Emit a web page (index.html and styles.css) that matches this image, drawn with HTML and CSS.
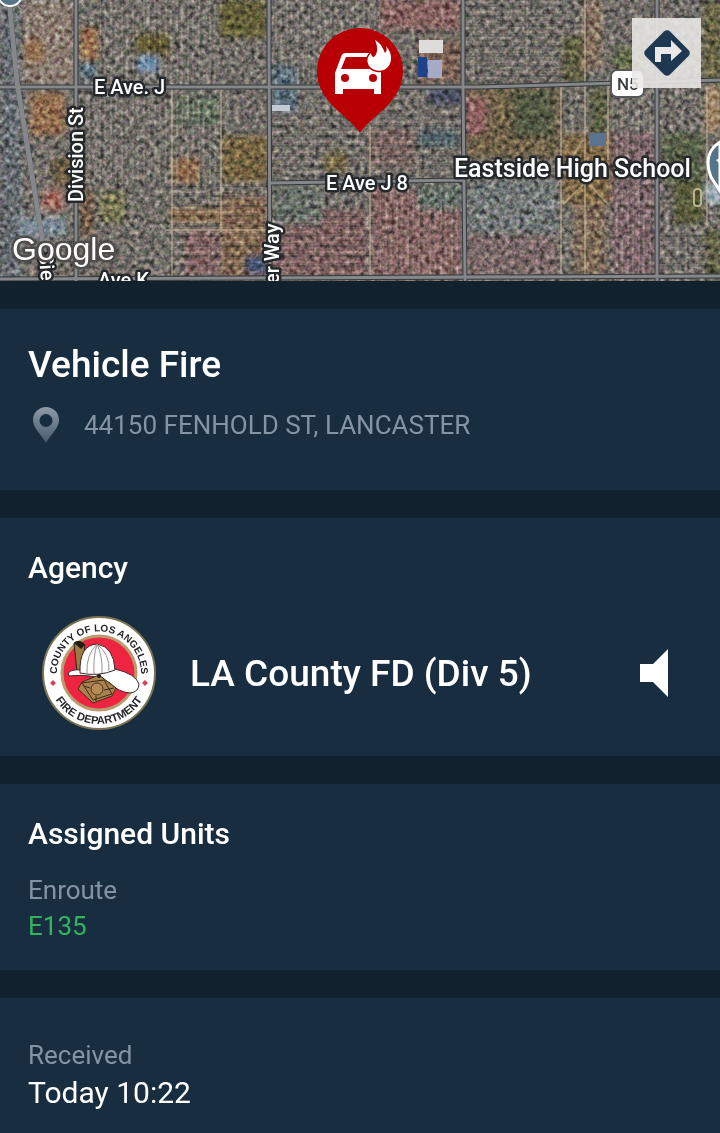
FILE: index.html
```html
<!DOCTYPE html>
<html lang="en">
<head>
    <meta charset="UTF-8">
    <meta name="viewport" content="width=device-width, initial-scale=1.0">
    <title>Vehicle Fire</title>
    <link rel="stylesheet" href="styles.css">
</head>
<body>
    <div class="map">
        <svg class="map-view" viewBox="0 0 720 281" role="img" aria-label="Incident map">
            <defs>
                <filter id="grain" x="0" y="0" width="100%" height="100%" color-interpolation-filters="sRGB">
                    <feTurbulence type="fractalNoise" baseFrequency="0.2" numOctaves="3" seed="7"/>
                    <feColorMatrix values="1.3 .5 .3 0 -.62  1.1 .7 .3 0 -.62  1.1 .5 .5 0 -.62  0 0 0 0 1"/>
                </filter>
                <filter id="soft"><feGaussianBlur stdDeviation="3"/></filter>
                <pattern id="blocksV" width="11" height="47" patternUnits="userSpaceOnUse">
                    <path d="M1 0V42M6 4V47" stroke="#c9bfb4" stroke-opacity=".35"/>
                    <path d="M3 0V47M0 44H11" stroke="#39403b" stroke-opacity=".25"/>
                </pattern>
                <pattern id="blocksH" width="53" height="10" patternUnits="userSpaceOnUse">
                    <path d="M0 2H48M50 0V10" stroke="#d2beb0" stroke-opacity=".4"/>
                    <path d="M0 6H53" stroke="#383f40" stroke-opacity=".3" stroke-width="2"/>
                </pattern>
            </defs>

            <!-- Land -->
            <rect width="720" height="281" fill="#7b7771"/>
            <g filter="url(#soft)">
                <rect x="0" y="0" width="22" height="281" fill="#70767a"/>
                <rect x="22" y="0" width="52" height="86" fill="#93857a"/>
                <rect x="24" y="40" width="20" height="22" fill="#9c7c58"/>
                <rect x="80" y="28" width="18" height="32" fill="#a37a56"/>
                <rect x="80" y="62" width="16" height="17" fill="#617985"/>
                <rect x="30" y="92" width="35" height="43" fill="#987654"/>
                <rect x="52" y="158" width="23" height="28" fill="#726446"/>
                <rect x="43" y="190" width="20" height="20" fill="#ac776b"/>
                <rect x="18" y="218" width="48" height="18" fill="#8795a0"/>
                <rect x="80" y="190" width="14" height="46" fill="#7e6650"/>
                <rect x="100" y="192" width="25" height="30" fill="#7f7c58"/>
                <rect x="136" y="34" width="34" height="22" fill="#6a6135"/>
                <rect x="138" y="56" width="20" height="16" fill="#7899b8"/>
                <rect x="220" y="0" width="46" height="38" fill="#6b663e"/>
                <rect x="174" y="96" width="46" height="28" fill="#6c7766"/>
                <rect x="174" y="158" width="26" height="25" fill="#977352"/>
                <rect x="222" y="136" width="46" height="46" fill="#7f6d48"/>
                <rect x="170" y="208" width="50" height="14" fill="#927655"/>
                <rect x="220" y="196" width="48" height="84" fill="#8a7058"/>
                <rect x="184" y="230" width="34" height="46" fill="#886b6b"/>
                <rect x="246" y="256" width="22" height="18" fill="#44597b"/>
                <rect x="380" y="0" width="82" height="30" fill="#8f6c69"/>
                <rect x="272" y="66" width="24" height="46" fill="#637886"/>
                <rect x="418" y="40" width="44" height="42" fill="#83695b"/>
                <rect x="428" y="88" width="34" height="16" fill="#4d5368"/>
                <rect x="418" y="130" width="40" height="16" fill="#526870"/>
                <rect x="325" y="152" width="22" height="20" fill="#7b7048"/>
                <rect x="370" y="128" width="45" height="40" fill="#836e6a"/>
                <rect x="272" y="210" width="94" height="68" fill="#866968"/>
                <rect x="372" y="190" width="90" height="88" fill="#8b6c6b"/>
                <rect x="272" y="186" width="50" height="38" fill="#717870"/>
                <rect x="418" y="186" width="44" height="24" fill="#6c786f"/>
                <rect x="466" y="86" width="94" height="72" fill="#78694f"/>
                <rect x="512" y="90" width="42" height="48" fill="#5a6048"/>
                <rect x="466" y="98" width="20" height="36" fill="#966b69"/>
                <rect x="562" y="36" width="22" height="48" fill="#696748"/>
                <rect x="614" y="48" width="30" height="28" fill="#6b7150"/>
                <rect x="585" y="0" width="16" height="70" fill="#8f7c68"/>
                <rect x="590" y="88" width="18" height="45" fill="#64684a"/>
                <rect x="562" y="134" width="50" height="70" fill="#85704d"/>
                <rect x="611" y="132" width="48" height="146" fill="#836d70"/>
                <rect x="468" y="180" width="90" height="54" fill="#7a807f"/>
                <rect x="466" y="234" width="90" height="42" fill="#837170"/>
                <rect x="574" y="204" width="32" height="74" fill="#877460"/>
                <rect x="662" y="134" width="42" height="50" fill="#5f684f"/>
                <rect x="704" y="0" width="16" height="82" fill="#6f6a49"/>
                <rect x="706" y="86" width="14" height="46" fill="#a68d6c"/>
                <rect x="674" y="182" width="30" height="42" fill="#5e6241"/>
                <rect x="706" y="184" width="14" height="20" fill="#a8bbc5"/>
                <rect x="706" y="230" width="14" height="48" fill="#656547"/>
            </g>
            <rect x="80" y="90" width="140" height="96" fill="url(#blocksV)"/>
            <rect x="270" y="0" width="110" height="84" fill="url(#blocksV)"/>
            <rect x="100" y="0" width="120" height="84" fill="url(#blocksV)"/>
            <rect x="380" y="186" width="84" height="92" fill="url(#blocksV)"/>
            <rect x="612" y="92" width="46" height="186" fill="url(#blocksV)"/>
            <rect x="170" y="186" width="98" height="92" fill="url(#blocksH)"/>
            <rect x="272" y="110" width="190" height="72" fill="url(#blocksH)"/>
            <rect x="272" y="216" width="106" height="62" fill="url(#blocksH)"/>
            <rect x="466" y="0" width="96" height="80" fill="url(#blocksH)"/>
            <rect x="660" y="228" width="46" height="50" fill="url(#blocksH)"/>
            <rect class="grain" width="720" height="281" filter="url(#grain)"/>
            <rect x="419" y="40" width="24" height="13" fill="#dedcda"/>
            <rect x="418" y="57" width="9" height="20" fill="#1d438b"/>
            <rect x="428" y="60" width="14" height="18" fill="#a5abc4"/>
            <rect x="272" y="105" width="18" height="6" fill="#c4cad4"/>
            <rect x="590" y="133" width="16" height="13" fill="#5a7390"/>
            <rect x="694" y="189" width="7" height="17" rx="3" fill="none" stroke="#bcb388" stroke-width="2"/>
            <path d="M172 88V280M165 230H268M221 88V232M370 125V278M561 86V278M585 0V278M608 88V160M707 86V225M583 140L563 172M583 185L563 204M590 185L608 204" fill="none" stroke="#d7c4a4" stroke-opacity=".45" stroke-width="2"/>

            <!-- Roads -->
            <g class="road-edge">
                <path d="M0 87H480L720 80M76 0V281M269 0V60L270 281M463 0V85L465 281M657 0V281M270 183L465 180M0 279L720 276M9 0L17 82L44 250L50 281"/>
            </g>
            <g class="road">
                <path d="M0 87H480L720 80M76 0V281M269 0V60L270 281M463 0V85L465 281M657 0V281M270 183L465 180M0 279L720 276"/>
                <path class="road-wide" d="M9 0L17 82L44 250L50 281"/>
            </g>

            <!-- Places -->
            <circle cx="10" cy="-6" r="12" fill="#557487" stroke="#f4f6f7" stroke-width="2"/>
            <path d="M720 191L711 177Q708 170 708 163A24 24 0 0 1 720 142Z" fill="#557487" stroke="#fff" stroke-width="3"/>
            <path d="M716 160l4-2v6z" fill="#fff"/>
            <rect x="611" y="70" width="33" height="27" rx="6" fill="#fff" stroke="#55585b" stroke-width="2"/>
            <text class="shield" x="617" y="90">N5</text>

            <!-- Labels -->
            <g class="label">
                <text x="94" y="94">E Ave. J</text>
                <text x="326" y="190">E Ave J 8</text>
                <text x="98" y="287">Ave K</text>
                <text transform="translate(83 202) rotate(-90)">Division St</text>
                <text transform="translate(279 284) rotate(-90)">er Way</text>
                <text transform="translate(39 253) rotate(86)">Sie</text>
                <text class="label-place" x="454" y="177">Eastside High School</text>
                <text class="label-logo" x="12" y="260">Google</text>
            </g>

            <!-- Incident pin -->
            <path d="M360 133C352 121 340 114 330 103C322 93 317 84 317 71A43 43 0 0 1 403 71C403 84 398 93 390 103C380 114 368 121 360 133Z" fill="#b80004"/>
            <path d="M335 94V73L341 57Q342 53 346 53H372V57H346L341 69H381V94H374V89H343V94Z" fill="#fff"/>
            <circle cx="345" cy="78" r="4" fill="#b80004"/>
            <circle cx="373" cy="78" r="4" fill="#b80004"/>
            <path d="M375 40C382 44 383 49 385 53C387 51 387 49 386 46C393 54 392 62 388 67C382 73 374 71 370 67C366 62 367 57 371 53C371 55 372 57 374 57C378 53 378 47 375 40Z" fill="#fff" stroke="#b80004" stroke-width="3" paint-order="stroke"/>
        </svg>
        <button type="button" class="directions-btn" aria-label="Directions">
            <svg width="46" height="46" viewBox="0 0 46 46">
                <path d="M20 1.500Q23-1 26 1.500L44.500 20Q47 23 44.500 26L26 44.500Q23 47 20 44.500L1.500 26Q-1 23 1.500 20Z" fill="#1d3850"/>
                <path d="M11 32V17H27V10L38 21L27 31V24H17V32Z" fill="#ebe9e7"/>
            </svg>
        </button>
    </div>

    <div class="card incident">
        <h1>Vehicle Fire</h1>
        <div class="address">
            <svg width="28" height="36" viewBox="0 0 28 36">
                <defs>
                    <linearGradient id="pinFade" x1="0" y1="0" x2="0" y2="1">
                        <stop offset="0" stop-color="#8d9aa8"/>
                        <stop offset="1" stop-color="#46596d"/>
                    </linearGradient>
                </defs>
                <path fill="url(#pinFade)" fill-rule="evenodd" d="M14 0A13 13 0 0 1 27 13C27 21 19 27 14 36C9 27 1 21 1 13A13 13 0 0 1 14 0ZM14 7A6 6 0 1 0 14 20A6 6 0 1 0 14 7Z"/>
            </svg>
            <span>44150 FENHOLD ST, LANCASTER</span>
        </div>
    </div>

    <div class="card agency">
        <h2>Agency</h2>
        <div class="agency-row">
            <svg class="seal" width="114" height="114" viewBox="0 0 114 114" role="img" aria-label="County of Los Angeles Fire Department">
                <defs>
                    <path id="sealTop" d="M18 73A42 42 0 1 1 96 73"/>
                    <path id="sealBottom" d="M6 57A51 51 0 0 0 108 57"/>
                </defs>
                <circle cx="57" cy="57" r="56" fill="#fff" stroke="#7c7352" stroke-width="2"/>
                <circle cx="57" cy="57" r="37" fill="#ef2440" stroke="#b99b6d" stroke-width="3"/>
                <text class="seal-text"><textPath href="#sealTop" startOffset="50%">COUNTY OF LOS ANGELES</textPath></text>
                <text class="seal-text seal-text-bottom"><textPath href="#sealBottom" startOffset="50%">FIRE DEPARTMENT</textPath></text>
                <path d="M11 64l3 3-3 3-3-3zM103 64l3 3-3 3-3-3z" fill="#d5415a"/>
                <!-- Helmet -->
                <path d="M32 27Q37 23 43 29L39 57L35 56Z" fill="#9c7b43" stroke="#2b2118"/>
                <path d="M32 27Q38 22 43 29L39 33Z" fill="#231d1a"/>
                <path d="M26 57Q30 53 38 54L73 53Q94 58 97 68Q97 76 88 77Q76 76 68 67Q52 57 27 60Z" fill="#fff" stroke="#3d2525"/>
                <path d="M38 57Q37 29 55 28Q72 31 73 54Q56 61 38 57Z" fill="#fff" stroke="#3d2525"/>
                <path d="M55 28Q44 39 45 57M55 28Q51 41 52 58M55 28Q61 42 60 57M55 28Q68 38 67 55" fill="none" stroke="#99948f"/>
                <path d="M57 59L74 72L70 80L51 87L36 73L40 66Z" fill="#a9834e" stroke="#3c2a17"/>
                <path d="M40 67L51 84L70 78L62 64ZM42 70L48 72M62 74L72 72M54 80V85" fill="none" stroke="#3c2a17"/>
                <circle cx="55" cy="73" r="6" fill="#b98957" stroke="#4b3520"/>
                <circle cx="57" cy="60" r="2" fill="#2b2118"/>
            </svg>
            <span class="agency-name">LA County FD (Div 5)</span>
            <button type="button" class="audio-btn" aria-label="Listen">
                <svg width="29" height="48" viewBox="0 0 29 48">
                    <path d="M0 15H13L28 0V48L13 33H0Z" fill="#fff"/>
                </svg>
            </button>
        </div>
    </div>

    <div class="card units">
        <h2>Assigned Units</h2>
        <div class="caption">Enroute</div>
        <div class="unit-enroute">E135</div>
    </div>

    <div class="card received">
        <div class="caption">Received</div>
        <div class="received-time">Today 10:22</div>
    </div>
</body>
</html>
```
FILE: styles.css
```css
body {
    font-family: Roboto, sans-serif;
    background-color: #12212e;
    color: white;
    margin: 0;
}
.map {
    position: relative;
}
.map-view {
    display: block;
    width: 100%;
    height: auto;
}
.grain {
    mix-blend-mode: overlay;
    opacity: 0.6;
}
.road-edge path {
    fill: none;
    stroke: #343a3d;
    stroke-width: 5;
}
.road path {
    fill: none;
    stroke: #85878a;
    stroke-width: 3;
}
.road .road-wide {
    stroke-width: 5;
}
.label text {
    font-size: 20px;
    font-weight: 500;
    fill: white;
    stroke: #25282a;
    stroke-width: 5px;
    stroke-linejoin: round;
    paint-order: stroke;
}
.label .label-place {
    font-size: 25px;
}
.label .label-logo {
    font-family: "Liberation Sans", sans-serif;
    font-size: 32px;
    stroke: #4e4d4b;
}
.shield {
    font-size: 17px;
    font-weight: 500;
    fill: #3b3e40;
}
button {
    border: 0;
    padding: 0;
    background: none;
    display: flex;
    align-items: center;
    justify-content: center;
    cursor: pointer;
}
/* Floats over the map */
.directions-btn {
    position: absolute;
    top: 18px;
    right: 19px;
    width: 69px;
    height: 70px;
    background-color: rgba(235, 233, 231, 0.88);
}
.card {
    background-color: #182d40;
    padding: 32px 28px 26px;
    margin-top: 28px;
}
h1, h2 {
    font-weight: 500;
    margin: 0;
}
h1 {
    font-size: 37px;
    line-height: 48px;
}
h2 {
    font-size: 30px;
    line-height: 36px;
}
.incident {
    padding-bottom: 45px;
}
.address {
    display: flex;
    align-items: center;
    gap: 24px;
    margin-top: 16px;
    padding-left: 4px;
    font-size: 26px;
    line-height: 40px;
    color: #8494a5;
}
.agency-row {
    display: flex;
    align-items: center;
    margin-top: 30px;
    padding: 0 23px 0 14px;
}
.seal-text {
    font-family: "Liberation Sans", sans-serif;
    font-size: 10px;
    font-weight: bold;
    fill: #25252b;
    text-anchor: middle;
}
.seal-text-bottom {
    font-size: 11px;
}
.agency-name {
    flex: 1;
    margin-left: 34px;
    font-size: 37px;
    font-weight: 500;
}
.caption {
    font-size: 26px;
    line-height: 36px;
    color: #8494a5;
}
.units h2 {
    margin-bottom: 20px;
}
.unit-enroute {
    font-size: 26px;
    line-height: 36px;
    color: #32b45f;
}
.received {
    padding-top: 39px;
    padding-bottom: 20px;
}
.received-time {
    font-size: 30px;
    line-height: 40px;
}
```
